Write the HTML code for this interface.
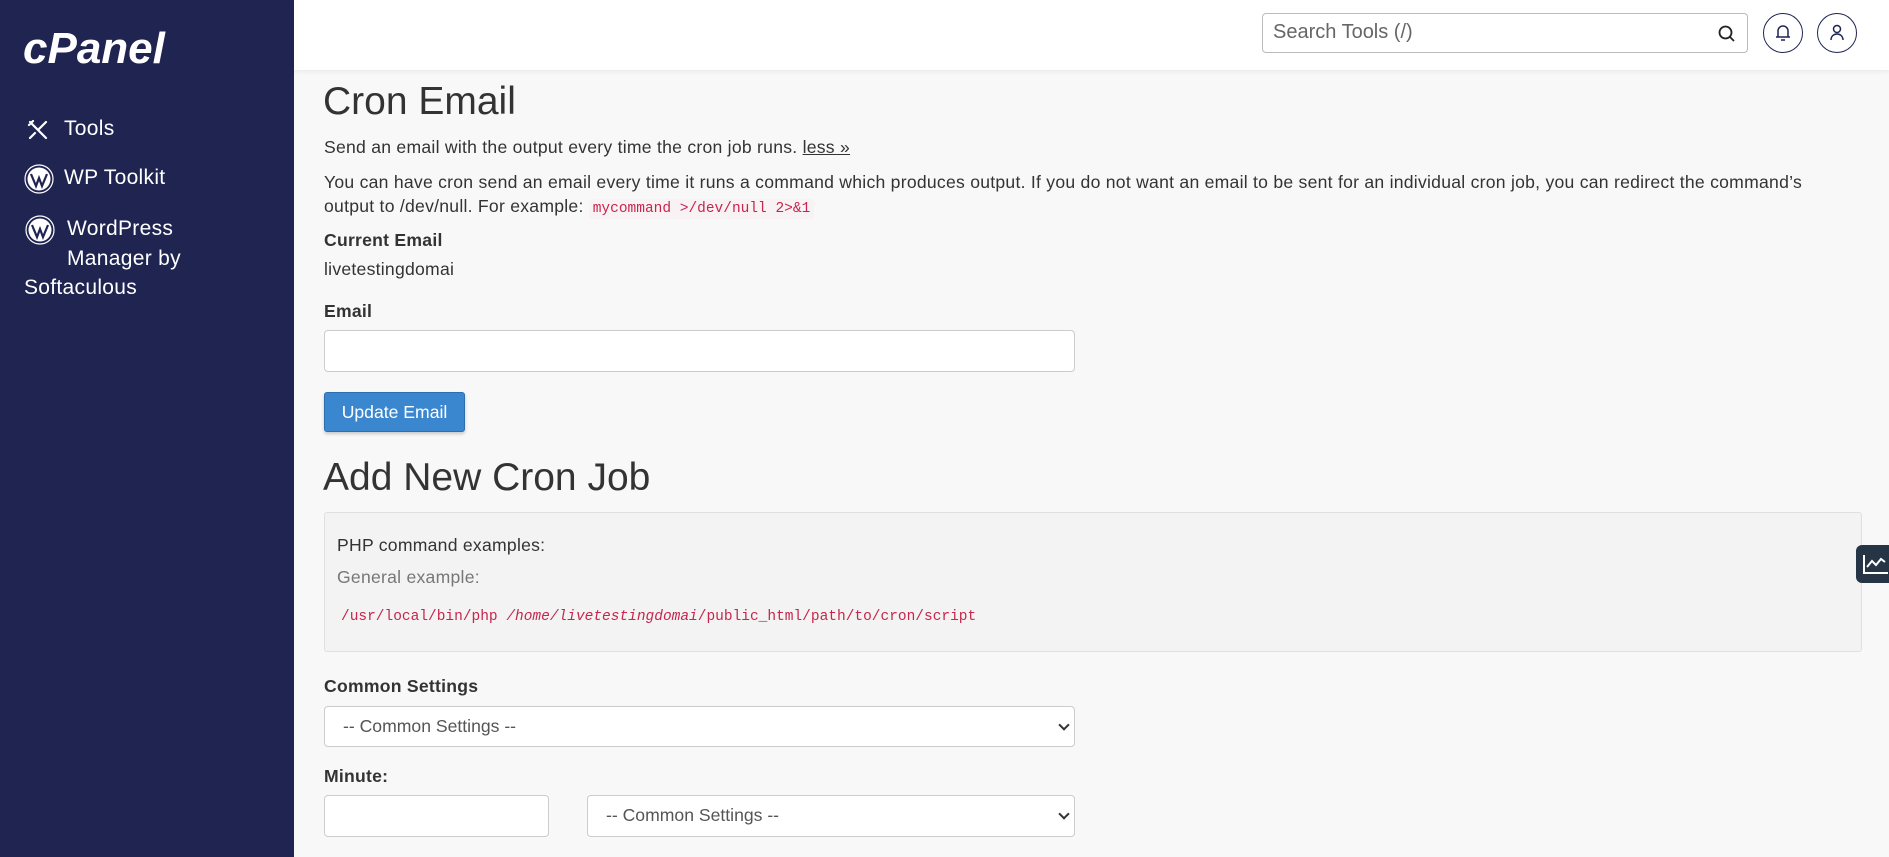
<!DOCTYPE html>
<html><head><meta charset="utf-8"><style>
*{box-sizing:border-box;margin:0;padding:0}
body{width:1889px;height:857px;overflow:hidden;background:#f8f8f8;font-family:"Liberation Sans",sans-serif;color:#333;position:relative}
.sb{position:absolute;left:0;top:0;width:294px;height:857px;background:#1f2451;color:#fff}
.logo{position:absolute;left:23px;top:24px;font-size:44px;font-weight:bold;font-style:italic;letter-spacing:0px;color:#fff}
.mi{position:absolute;font-size:21px;color:#fff;line-height:30px;letter-spacing:.3px}
.hdr{position:absolute;left:294px;top:0;right:0;height:70px;background:#fff;box-shadow:0 2px 4px rgba(0,0,0,.06)}
.search{position:absolute;left:1262px;top:13px;width:486px;height:40px;border:1px solid #bbb;border-radius:4px;background:#fff;font-size:20px;color:#666;padding:7px 10px}
.circ{position:absolute;top:13px;width:40px;height:40px;border:1.5px solid #1f2451;border-radius:50%}
.c{position:absolute;left:324px;font-size:17.6px;letter-spacing:.25px;white-space:nowrap}
h1{position:absolute;left:323px;font-weight:normal;font-size:39px;color:#333;white-space:nowrap}
.b{font-weight:bold}
code{font-family:"Liberation Mono",monospace;color:#c7254e;background:#f9f2f4;font-size:14.5px;letter-spacing:0;padding:2px 4px;border-radius:3px}
.inp{position:absolute;background:#fff;border:1px solid #ccc;border-radius:4px}
.sel{font-size:17.6px;color:#555;padding:9px 18px}
.arr{position:absolute;right:6px;top:14px;width:8px;height:8px;border-right:2px solid #333;border-bottom:2px solid #333;transform:rotate(45deg)}
</style></head><body>
<div class="sb">
<div class="logo">cPanel</div>
<svg style="position:absolute;left:26px;top:118px" width="24" height="24" viewBox="0 0 24 24" fill="none" stroke="#fff" stroke-width="2.2" stroke-linecap="round"><path d="M4 4l16 16M20 4l-7 7M4 20l5-5M3 7l4-4"/></svg>
<div class="mi" style="left:64px;top:114px">Tools</div>
<svg style="position:absolute;left:24px;top:164px" width="30" height="30" viewBox="0 0 30 30"><circle cx="15" cy="15" r="14" fill="none" stroke="#fff" stroke-width="1.2"/><circle cx="15" cy="15" r="11.5" fill="#fff"/><path d="M7 10l5 12 3-8 3 8 5-12" stroke="#1f2451" stroke-width="2.2" fill="none"/></svg>
<div class="mi" style="left:64px;top:163px">WP Toolkit</div>
<svg style="position:absolute;left:25px;top:215px" width="30" height="30" viewBox="0 0 30 30"><circle cx="15" cy="15" r="14" fill="none" stroke="#fff" stroke-width="1.2"/><circle cx="15" cy="15" r="11.5" fill="#fff"/><path d="M7 10l5 12 3-8 3 8 5-12" stroke="#1f2451" stroke-width="2.2" fill="none"/></svg>
<div class="mi" style="left:67px;top:214px">WordPress</div>
<div class="mi" style="left:67px;top:244px">Manager by</div>
<div class="mi" style="left:24px;top:273px">Softaculous</div>
</div>
<div class="hdr"></div>
<div class="search">Search Tools (/)
<svg style="position:absolute;right:10px;top:10px" width="20" height="20" viewBox="0 0 20 20" fill="none" stroke="#222" stroke-width="1.8"><circle cx="8.5" cy="8.5" r="6"/><path d="M13 13l4 4"/></svg></div>
<div class="circ" style="left:1763px"><svg style="position:absolute;left:10px;top:9px" width="18" height="20" viewBox="0 0 18 20" fill="none" stroke="#1f2451" stroke-width="1.5"><path d="M4 14V8a5 5 0 0110 0v6H4zM2 14h14M7 17h4"/></svg></div>
<div class="circ" style="left:1817px"><svg style="position:absolute;left:10px;top:9px" width="18" height="20" viewBox="0 0 18 20" fill="none" stroke="#1f2451" stroke-width="1.5"><circle cx="9" cy="6" r="3.5"/><path d="M3 17c0-4 3-6 6-6s6 2 6 6"/></svg></div>

<h1 style="top:80px">Cron Email</h1>
<div class="c" style="top:137px">Send an email with the output every time the cron job runs. <u>less »</u></div>
<div class="c" style="top:172px">You can have cron send an email every time it runs a command which produces output. If you do not want an email to be sent for an individual cron job, you can redirect the command’s</div>
<div class="c" style="top:196px">output to /dev/null. For example: <code>mycommand &gt;/dev/null 2&gt;&amp;1</code></div>
<div class="c b" style="top:230px">Current Email</div>
<div class="c" style="top:259px">livetestingdomai</div>
<div class="c b" style="top:301px">Email</div>
<div class="inp" style="left:324px;top:330px;width:751px;height:42px"></div>
<div style="position:absolute;left:324px;top:392px;width:141px;height:40px;background:#3a87d0;border:1px solid #2d6fae;border-radius:3px;color:#fff;font-size:17.6px;text-align:center;line-height:38px;box-shadow:0 2px 3px rgba(0,0,0,.2)">Update Email</div>
<h1 style="top:456px">Add New Cron Job</h1>
<div style="position:absolute;left:324px;top:512px;width:1538px;height:140px;background:#f3f3f3;border:1px solid #e0e0e0;border-radius:3px"></div>
<div class="c" style="left:337px;top:535px">PHP command examples:</div>
<div class="c" style="left:337px;top:567px;color:#777">General example:</div>
<div class="c" style="left:337px;top:604px"><code style="background:none">/usr/local/bin/php <i>/home/livetestingdomai</i>/public_html/path/to/cron/script</code></div>
<div class="c b" style="top:676px">Common Settings</div>
<div class="inp sel" style="left:324px;top:706px;width:751px;height:41px">-- Common Settings --<span class="arr"></span></div>
<div class="c b" style="top:766px">Minute:</div>
<div class="inp" style="left:324px;top:795px;width:225px;height:42px"></div>
<div class="inp sel" style="left:587px;top:795px;width:488px;height:42px">-- Common Settings --<span class="arr"></span></div>
<div style="position:absolute;left:1856px;top:545px;width:40px;height:38px;background:#263545;border-radius:6px 0 0 6px">
<svg style="position:absolute;left:6px;top:8px" width="26" height="22" viewBox="0 0 26 22" fill="none" stroke="#fff" stroke-width="2"><path d="M2 2v18h24M5 14l5-6 4 4 5-6 4 3"/></svg></div>
</body></html>
